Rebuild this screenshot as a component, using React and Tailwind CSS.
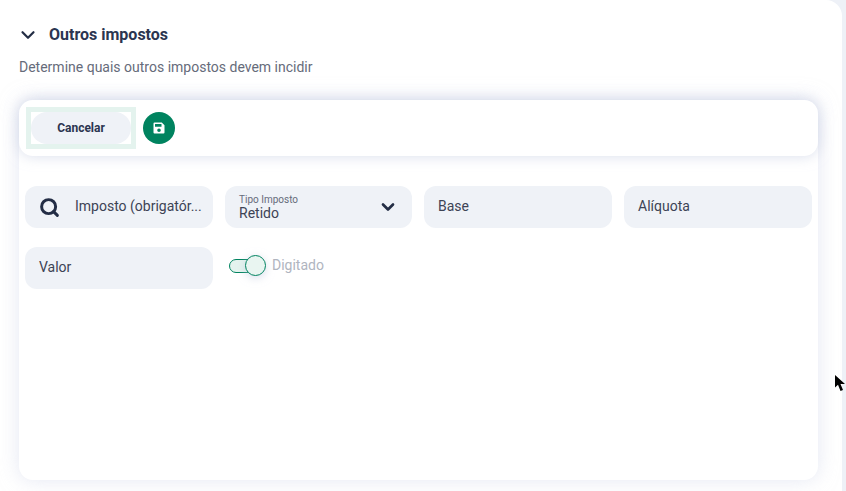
import { ChevronDown, Search } from 'lucide-react';

const TextField = ({ label }) => (
  <div className="h-[42px] bg-[#eff2f7] rounded-[12px] flex items-center px-[14px] pb-[2px] text-[14px] text-[#3d4355]">
    {label}
  </div>
);

const SaveIcon = () => (
  <svg width="14" height="14" viewBox="0 0 14 14">
    <path
      fillRule="evenodd"
      fill="#ffffff"
      d="M2.5 1.5H9.8L12.5 4.2V11.5A1 1 0 0 1 11.5 12.5H2.5A1 1 0 0 1 1.5 11.5V2.5A1 1 0 0 1 2.5 1.5ZM3 3V5.8H9.5V3ZM7 7.4A1.8 1.8 0 1 0 7 11A1.8 1.8 0 1 0 7 7.4Z"
    />
  </svg>
);

const Cursor = () => (
  <svg className="absolute left-[835px] top-[375px]" width="11" height="17" viewBox="0 0 11 17">
    <path d="M0 0L0 12.5L3 9.8L5.5 16L8 15L5.5 9L10 9Z" fill="#000000" />
  </svg>
);

export default function App() {
  return (
    <div className="relative w-[846px] h-[491px] overflow-hidden bg-[#eef1f7] font-['Roboto',sans-serif]">
      <div className="w-[842px] h-[491px] bg-white rounded-tr-[16px] pt-[24px] px-[19px]">
        <div className="h-[21px] flex items-center">
          <ChevronDown size={22} strokeWidth={2.4} color="#232d45" className="mr-[10px] -ml-[2px]" />
          <h2 className="text-[16px] font-bold text-[#2b3550] leading-[21px]">Outros impostos</h2>
        </div>
        <p className="mt-[12px] text-[14px] leading-[20px] text-[#666b7a]">Determine quais outros impostos devem incidir</p>

        <div className="mt-[23px] w-[799px] h-[380px] bg-white rounded-[14px] shadow-[0_0_20px_rgba(205,212,232,0.55)]">
          <div className="h-[56px] rounded-[14px] bg-white shadow-[0_0_14px_rgba(190,198,222,0.6)] flex items-center pl-[7px] gap-[7px]">
            <div className="border-[5px] border-[#e4f3ee] h-[42px]">
              <button className="w-[100px] h-[32px] rounded-full bg-[#eff2f7] text-[12px] font-bold text-[#2b3550]">
                Cancelar
              </button>
            </div>
            <button className="w-[32px] h-[32px] rounded-full bg-[#00835f] flex items-center justify-center">
              <SaveIcon />
            </button>
          </div>

          <div className="mt-[30px] px-[6px] grid grid-cols-[188px_187px_188px_188px] gap-x-[12px] gap-y-[19px]">
            <div className="h-[42px] bg-[#eff2f7] rounded-[12px] flex items-center pl-[14px] pb-[2px] text-[14px] text-[#3d4355]">
              <Search size={21} strokeWidth={3.4} color="#232d45" className="shrink-0 mt-[2px]" />
              <span className="ml-[15px]">Imposto (obrigatór...</span>
            </div>
            <div className="h-[42px] bg-[#eff2f7] rounded-[12px] flex items-center justify-between pl-[14px] pr-[14px]">
              <div className="flex flex-col mt-[1px]">
                <span className="text-[10px] leading-[11px] text-[#666b7a]">Tipo Imposto</span>
                <span className="text-[14px] leading-[17px] text-[#3d4355]">Retido</span>
              </div>
              <ChevronDown size={20} strokeWidth={3.2} color="#232d45" />
            </div>
            <TextField label="Base" />
            <TextField label="Alíquota" />
            <TextField label="Valor" />
            <div className="h-[42px] flex items-start pt-[8px] pl-[4px]">
              <div className="relative w-[37px] h-[21px] flex items-center">
                <div className="w-[30px] h-[14px] rounded-full bg-[#e4f3ee] border border-[#00835f]" />
                <div className="absolute left-[16px] top-0 w-[21px] h-[21px] rounded-full bg-[#e9f5f1] border border-[#00835f] shadow-[0_2px_8px_rgba(190,198,222,0.6)]" />
              </div>
              <span className="ml-[6px] text-[14px] leading-[20px] text-[#b0b5bf]">Digitado</span>
            </div>
          </div>
        </div>
      </div>
      <Cursor />
    </div>
  );
}
